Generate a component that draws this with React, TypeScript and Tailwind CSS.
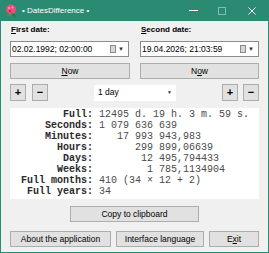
import React from "react";

const sans = "font-['Liberation_Sans',Arial,sans-serif]";
const mono = "font-['Liberation_Mono','Courier_New',monospace]";

const rows: [string, string][] = [
  ["Full:", "12495 d. 19 h. 3 m. 59 s."],
  ["Seconds:", "1 079 636 639"],
  ["Minutes:", "   17 993 943,983"],
  ["Hours:", "      299 899,06639"],
  ["Days:", "       12 495,794433"],
  ["Weeks:", "        1 785,1134904"],
  ["Full months:", "410 (34 × 12 + 2)"],
  ["Full years:", "34"],
];

const AppIcon = () => (
  <svg width="13" height="13" viewBox="0 0 13 13">
    <circle cx="6" cy="5.5" r="5" fill="#e8507a" />
    <circle cx="4" cy="4" r="1" fill="#f7a3bb" />
    <circle cx="7.5" cy="3.5" r="1" fill="#f7a3bb" />
    <circle cx="5" cy="7" r="1" fill="#b8204c" />
    <path d="M6 8 L12 13 L8 12 Z" fill="#2d7a2a" />
    <path d="M3 9 L7 12 L2 12 Z" fill="#3f9a35" />
  </svg>
);

const DateInput = ({ value }: { value: string }) => (
  <div className="flex h-[16px] items-center border border-[#8c8c8c] bg-white pl-[1px] pr-[4px]">
    <span className="flex-1 text-[8.5px] text-black">{value}</span>
    <span className="mr-[2px] h-[8px] w-[6px] border border-[#8a8a8a] bg-[#d8d8d8]" />
    <span className="text-[6px] text-[#333]">▼</span>
  </div>
);

const Btn = ({
  children,
  className = "",
}: {
  children: React.ReactNode;
  className?: string;
}) => (
  <div
    className={`flex h-[16px] items-center justify-center border border-[#adadad] bg-[#e1e1e1] text-[8.5px] text-black ${className}`}
  >
    {children}
  </div>
);

export default function App() {
  return (
    <div className={`flex h-[253px] w-[269px] flex-col bg-[#2b8b72] px-[1px] pb-[1px] ${sans}`}>
      {/* title bar */}
      <div className="flex h-[21px] items-center text-white">
        <div className="ml-[4px]">
          <AppIcon />
        </div>
        <span className="ml-[4px] text-[8px]">• DatesDifference •</span>
        <div className="ml-auto flex items-center">
          <span className="h-[1px] w-[9px] bg-white" />
          <span className="ml-[20px] h-[8px] w-[8px] border border-[#7fbfae]" />
          <svg className="ml-[22px] mr-[12px]" width="8" height="8" viewBox="0 0 8 8">
            <path d="M0.5 0.5 L7.5 7.5 M7.5 0.5 L0.5 7.5" stroke="white" strokeWidth="1" />
          </svg>
        </div>
      </div>

      {/* body */}
      <div className="flex flex-1 flex-col bg-[#f0f0f0] px-[9px] pt-[4px]">
        <div className="grid grid-cols-2 gap-x-[11px]">
          <div className="flex flex-col">
            <span className="h-[10px] pl-[1px] text-[8px] font-bold leading-[10px] text-black">
              <span className="underline">F</span>irst date:
            </span>
            <div className="mt-[6px]">
              <DateInput value="02.02.1992; 02:00:00" />
            </div>
            <Btn className="mt-[6px] -mr-[1px]">
              <span className="underline">N</span>ow
            </Btn>
          </div>
          <div className="flex flex-col">
            <span className="h-[10px] pl-[1px] text-[8px] font-bold leading-[10px] text-black">
              <span className="underline">S</span>econd date:
            </span>
            <div className="mt-[6px]">
              <DateInput value="19.04.2026; 21:03:59" />
            </div>
            <Btn className="mt-[6px]">
              N<span className="underline">o</span>w
            </Btn>
          </div>
        </div>

        {/* step row */}
        <div className="mt-[5px] flex h-[17px] items-center justify-between">
          <div className="flex gap-[6px]">
            <Btn className="h-[17px] w-[16px] text-[11px] font-bold">+</Btn>
            <Btn className="h-[17px] w-[16px] text-[11px] font-bold">−</Btn>
          </div>
          <div className="flex h-[16px] w-[82px] items-center bg-white pl-[4px] pr-[4px]">
            <span className="flex-1 text-[8.5px] text-black">1 day</span>
            <span className="text-[5px] text-[#333]">▼</span>
          </div>
          <div className="flex gap-[5px]">
            <Btn className="h-[17px] w-[16px] text-[11px] font-bold">+</Btn>
            <Btn className="h-[17px] w-[16px] text-[11px] font-bold">−</Btn>
          </div>
        </div>

        {/* results */}
        <div className={`mt-[7px] h-[91px] bg-white pl-[11px] pt-[1px] text-[10px] leading-[11px] ${mono}`}>
          {rows.map(([label, value]) => (
            <div key={label} className="flex whitespace-pre">
              <span className="w-[72px] text-right font-bold text-[#2a2a2a]">{label}</span>
              <span className="ml-[6px] text-[#4a4a4a]">{value}</span>
            </div>
          ))}
        </div>

        <div className="mt-[7px] flex justify-center">
          <Btn className="w-[129px]">Copy to clipboard</Btn>
        </div>

        <div className="mt-[9px] flex gap-[5px]">
          <Btn className="w-[101px]">About the application</Btn>
          <Btn className="w-[88px] border-[#3c3c3c]">Interface language</Btn>
          <Btn className="w-[50px]">
            E<span className="underline">x</span>it
          </Btn>
        </div>
      </div>
    </div>
  );
}
